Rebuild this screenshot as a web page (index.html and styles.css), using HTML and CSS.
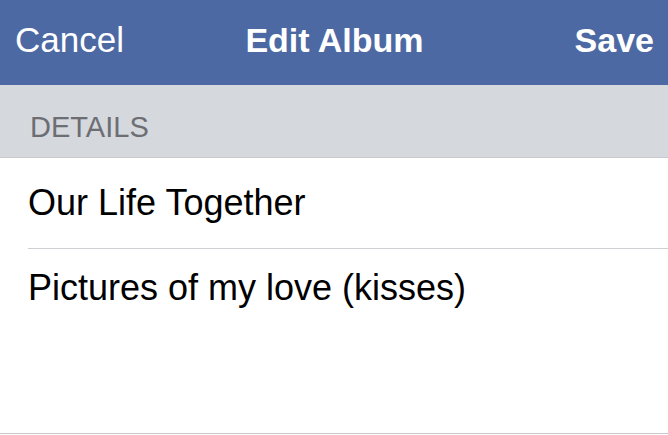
FILE: index.html
```html
<!DOCTYPE html>
<html lang="en">
<head>
<meta charset="utf-8">
<title>Edit Album</title>
<link rel="stylesheet" href="styles.css">
</head>
<body>
<header class="navbar">
  <span class="nav-left">Cancel</span>
  <span class="nav-title">Edit Album</span>
  <span class="nav-right">Save</span>
</header>
<div class="section-header">DETAILS</div>
<div class="fields">
  <div class="field field-title">Our Life Together</div>
  <div class="field field-desc">Pictures of my love (kisses)</div>
</div>
</body>
</html>
```
FILE: styles.css
```css
html, body {
  margin: 0;
  padding: 0;
  background: #ffffff;
}
body {
  width: 668px;
  height: 435px;
  overflow: hidden;
  font-family: "Liberation Sans", Arial, Helvetica, sans-serif;
}
.navbar {
  display: grid;
  grid-template-columns: 1fr auto 1fr;
  align-items: baseline;
  height: 85px;
  box-sizing: border-box;
  padding: 20px 14px 0 15px;
  background: #4c69a4;
  color: #ffffff;
  line-height: 40px;
}
.nav-left {
  font-size: 35px;
  justify-self: start;
}
.nav-title {
  font-size: 34px;
  font-weight: bold;
}
.nav-right {
  font-size: 34px;
  font-weight: bold;
  justify-self: end;
}
.section-header {
  height: 73px;
  box-sizing: border-box;
  padding: 26px 0 0 30px;
  background: #d5d8dd;
  color: #6d6e73;
  font-size: 29px;
  line-height: 32px;
  border-bottom: 1px solid #c8c7cc;
}
.fields {
  padding-left: 28px;
  border-bottom: 1px solid #c8c7cc;
}
.field {
  color: #000000;
  font-size: 36px;
  line-height: 40px;
  box-sizing: border-box;
}
.field-title {
  height: 91px;
  padding-top: 25px;
  border-bottom: 1px solid #d0d0d4;
}
.field-desc {
  height: 184px;
  padding-top: 19px;
}
```
